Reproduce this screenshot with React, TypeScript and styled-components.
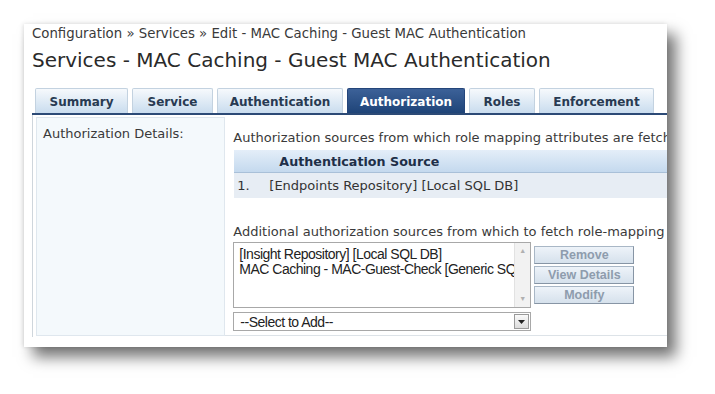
import React from "react";
import styled, { createGlobalStyle } from "styled-components";

const GlobalStyle = createGlobalStyle`
  html, body {
    margin: 0;
    padding: 0;
    background: #ffffff;
  }
  body {
    font-family: "DejaVu Sans", Verdana, sans-serif;
    color: #333;
  }
`;

const Page = styled.div`
  width: 715px;
  height: 394px;
  padding: 24px 0 0 24px;
  box-sizing: border-box;
  overflow: hidden;
`;

const Card = styled.div`
  width: 643px;
  height: 323px;
  background: #fff;
  box-shadow: 9px 10px 14px rgba(0, 0, 0, 0.55), -1px 0 4px rgba(0, 0, 0, 0.12);
  overflow: hidden;
  padding: 2px 0 0 8px;
  box-sizing: border-box;
`;

const Crumbs = styled.div`
  font-size: 13.3px;
  color: #3a3a3a;
  line-height: 16px;
  white-space: nowrap;
`;

const Title = styled.h1`
  margin: 5px 0 0;
  font-size: 20px;
  font-weight: normal;
  color: #2a2a2a;
  line-height: 26px;
  white-space: nowrap;
`;

const TabBar = styled.div`
  display: flex;
  gap: 4px;
  margin-top: 15px;
  padding-left: 3px;
  border-bottom: 2px solid #2c4a76;
  width: 700px;
`;

const Tab = styled.div<{ $w: number; $active?: boolean }>`
  width: ${(p) => p.$w}px;
  height: 25px;
  box-sizing: border-box;
  display: flex;
  align-items: center;
  justify-content: center;
  padding-top: 2px;
  font-size: 12px;
  font-weight: bold;
  border: 1px solid ${(p) => (p.$active ? "#24457a" : "#c3d2e0")};
  border-bottom: none;
  border-radius: 2px 2px 0 0;
  color: ${(p) => (p.$active ? "#ffffff" : "#283a52")};
  background: ${(p) =>
    p.$active
      ? "linear-gradient(#3c6198, #1f4478)"
      : "linear-gradient(#f6f9fc, #dbe8f4 60%, #c9dcee)"};
`;

const Body = styled.div`
  display: flex;
  border-left: 1px solid #cfd6dc;
  padding: 2px 0 0 3px;
  width: 700px;
  height: 222px;
  box-sizing: border-box;
`;

const LabelCell = styled.div`
  width: 190px;
  height: 219px;
  box-sizing: border-box;
  background: #f4f9fc;
  border: 1px solid #dfe7ee;
  padding: 8px 0 0 6px;
  font-size: 13px;
  line-height: 16px;
  color: #3a3a3a;
`;

const FieldCell = styled.div`
  flex: 1;
  height: 219px;
  box-sizing: border-box;
  border-bottom: 1px solid #dde3e8;
  padding: 13px 0 0 8px;
  font-size: 13px;
  color: #3a3a3a;
  white-space: nowrap;
`;

const Note = styled.div`
  line-height: 16px;
`;

const SourceTable = styled.div`
  margin-top: 4px;
  margin-left: 1px;
`;

const HeadRow = styled.div`
  height: 22px;
  display: flex;
  align-items: center;
  padding-left: 45px;
  font-weight: bold;
  font-size: 12.7px;
  color: #1e2f48;
  background: linear-gradient(#e4eef9, #c4d9ee);
  border-bottom: 1px solid #a9c0d8;
`;

const DataRow = styled.div`
  height: 25px;
  display: flex;
  align-items: center;
  padding-left: 3px;
  background: #e7edf4;
  font-size: 13px;
  color: #333;
`;

const Num = styled.span`
  width: 32px;
`;

const AddLabel = styled.div`
  margin-top: 26px;
  line-height: 16px;
  font-size: 13px;
`;

const Editor = styled.div`
  display: flex;
  gap: 3px;
  margin-top: 2px;
`;

const Left = styled.div`
  display: flex;
  flex-direction: column;
  gap: 4px;
`;

const ListBox = styled.div`
  width: 298px;
  height: 66px;
  box-sizing: border-box;
  border: 1px solid #a8a8a8;
  background: #fff;
  display: flex;
  font-family: "Liberation Sans", Arial, sans-serif;
  font-size: 14px;
  color: #222;
`;

const Items = styled.div`
  flex: 1;
  padding: 4px 0 0 5px;
  line-height: 15px;
  overflow: hidden;
  letter-spacing: -0.5px;
`;

const ScrollTrack = styled.div`
  width: 16px;
  background: #f2f2f2;
  border-left: 1px solid #e2e2e2;
  display: flex;
  flex-direction: column;
  justify-content: space-between;
  align-items: center;
  padding: 4px 0;
  box-sizing: border-box;
  color: #b0b0b0;
  font-size: 7px;
  line-height: 8px;
`;

const SelectBox = styled.div`
  width: 298px;
  height: 19px;
  box-sizing: border-box;
  border: 1px solid #a8a8a8;
  background: #fff;
  display: flex;
  align-items: center;
  justify-content: space-between;
  padding-left: 6px;
  font-family: "Liberation Sans", Arial, sans-serif;
  font-size: 14px;
  color: #222;
  letter-spacing: -0.5px;
`;

const DropBtn = styled.div`
  width: 15px;
  height: 15px;
  margin-right: 1px;
  box-sizing: border-box;
  border: 1px solid #9a9a9a;
  background: linear-gradient(#fafafa, #dcdcdc);
  display: flex;
  align-items: center;
  justify-content: center;
`;

const Buttons = styled.div`
  display: flex;
  flex-direction: column;
  gap: 2px;
  padding-top: 4px;
`;

const Button = styled.div`
  width: 100px;
  height: 18px;
  box-sizing: border-box;
  border: 1px solid #a9b7c6;
  border-bottom-color: #8795a5;
  border-right-color: #8795a5;
  background: linear-gradient(#eef3f9, #d6e1ec);
  display: flex;
  align-items: center;
  justify-content: center;
  font-family: "Liberation Sans", Arial, sans-serif;
  font-size: 12.5px;
  font-weight: bold;
  color: #8e9cad;
`;

const tabs = [
  { label: "Summary", w: 93 },
  { label: "Service", w: 81 },
  { label: "Authentication", w: 126 },
  { label: "Authorization", w: 118, active: true },
  { label: "Roles", w: 66 },
  { label: "Enforcement", w: 115 },
];

export default function App() {
  return (
    <>
      <GlobalStyle />
      <Page>
        <Card>
          <Crumbs>
            Configuration » Services » Edit - MAC Caching - Guest MAC Authentication
          </Crumbs>
          <Title>Services - MAC Caching - Guest MAC Authentication</Title>
          <TabBar>
            {tabs.map((t) => (
              <Tab key={t.label} $w={t.w} $active={t.active}>
                {t.label}
              </Tab>
            ))}
          </TabBar>
          <Body>
            <LabelCell>Authorization Details:</LabelCell>
            <FieldCell>
              <Note>
                Authorization sources from which role mapping attributes are fetched
              </Note>
              <SourceTable>
                <HeadRow>Authentication Source</HeadRow>
                <DataRow>
                  <Num>1.</Num>
                  [Endpoints Repository] [Local SQL DB]
                </DataRow>
              </SourceTable>
              <AddLabel>
                Additional authorization sources from which to fetch role-mapping attributes
              </AddLabel>
              <Editor>
                <Left>
                  <ListBox>
                    <Items>
                      <div>[Insight Repository] [Local SQL DB]</div>
                      <div>MAC Caching - MAC-Guest-Check [Generic SQL DB]</div>
                    </Items>
                    <ScrollTrack>
                      <span>▲</span>
                      <span>▼</span>
                    </ScrollTrack>
                  </ListBox>
                  <SelectBox>
                    --Select to Add--
                    <DropBtn>
                      <svg width="7" height="4" viewBox="0 0 7 4">
                        <path d="M0 0h7L3.5 4z" fill="#222" />
                      </svg>
                    </DropBtn>
                  </SelectBox>
                </Left>
                <Buttons>
                  <Button>Remove</Button>
                  <Button>View Details</Button>
                  <Button>Modify</Button>
                </Buttons>
              </Editor>
            </FieldCell>
          </Body>
        </Card>
      </Page>
    </>
  );
}
